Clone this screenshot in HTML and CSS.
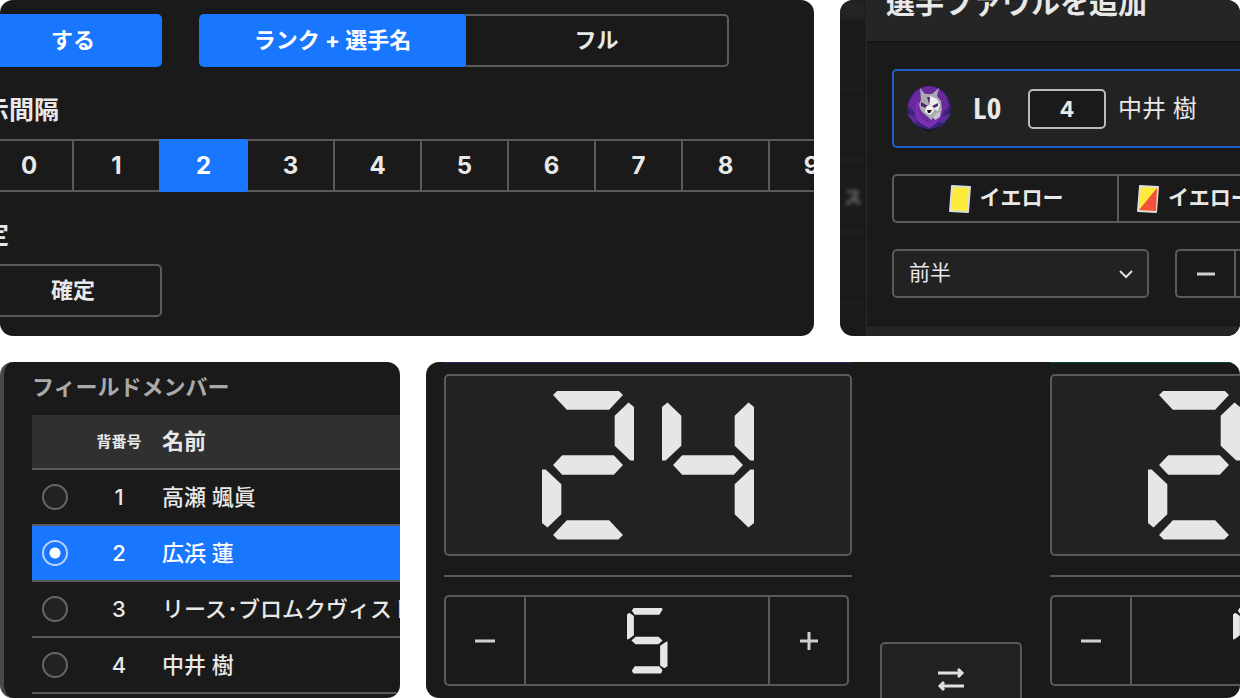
FILE: index.html
```
<!DOCTYPE html>
<html lang="ja">
<head>
  <meta charset="UTF-8" />
  <meta name="viewport" content="width=device-width, initial-scale=1.0" />
  <title>スコアボード</title>
  <link rel="stylesheet" href="styles.css">
</head>
<body>

  <main class="board">
    <div class="board-row wide-first">

      <section class="panel settings">
        <div class="settings-body">
          <div class="settings-row">
            <button class="btn active" type="button">する</button>
            <div class="segments">
              <button class="segment active" type="button">ランク + 選手名</button>
              <button class="segment" type="button">フル</button>
            </div>
          </div>
          <h2>示間隔</h2>
          <div class="segments numbers">
            <button class="segment" type="button">0</button>
            <button class="segment" type="button">1</button>
            <button class="segment active" type="button">2</button>
            <button class="segment" type="button">3</button>
            <button class="segment" type="button">4</button>
            <button class="segment" type="button">5</button>
            <button class="segment" type="button">6</button>
            <button class="segment" type="button">7</button>
            <button class="segment" type="button">8</button>
            <button class="segment" type="button">9</button>
          </div>
          <h2>定</h2>
          <button class="btn" type="button">確定</button>
        </div>
      </section>

      <section class="panel foul">
        <div class="backdrop">
          <div class="backdrop-row head"></div>
          <div class="backdrop-row"></div>
          <div class="backdrop-row"></div>
          <div class="backdrop-row">ス</div>
          <div class="backdrop-row"></div>
        </div>
        <div class="dialog">
          <header class="dialog-head">
            <h2>選手ファウルを追加</h2>
          </header>
          <div class="dialog-body">
            <div class="player">
              <svg class="emblem" viewBox="0 0 46 48" aria-hidden="true">
                <circle cx="23" cy="23" r="22" fill="#34206a"/>
                <path d="M6 11Q13 1 23 1t17 10l3 9-2 9-7 9-11 5-11-5-7-9-3-9z" fill="#6a2a9e"/>
                <path d="M4 22l5 6 1 5 6 5 7 6 7-6 6-5 1-5 5-6-1 10-7 9-11 5-11-5-7-9z" fill="#3b2378"/>
                <path d="M1 29l8 2 5 6-6 1zM45 29l-8 2-5 6 6 1z" fill="#5a2c96"/>
                <path d="M10 15l5 4-3 6 3 7 7 6 7-4 4-2-2 6-8 5-9-5-5-8z" fill="#7a2fb4"/>
                <path d="M14 3l5 6h7l7-6-2 8 4 5 1 9-3 4-4 3-4 3-4-4-4-3-3-4-1-5 2-4z" fill="#a9a9b0"/>
                <path d="M24 11l7 3 3 6-2 6-4-2-4-4z" fill="#ededf0"/>
                <path d="M15 17l7 4-2 2-5-2zM32 18l-6 3 2 2 4-2zM21 12h3l-1 7z" fill="#4a2472"/>
                <path d="M20 22l3-2 4 2 1 4-4 4-5-3z" fill="#f4f4f4"/>
                <path d="M21 25h5l-2 3h-2z" fill="#16101f"/>
                <path d="M27 32l4-4 4-2-1 6-5 3z" fill="#c4c4ca"/>
                <path d="M11 41l12 4 12-4-12 6z" fill="#18121f"/>
              </svg>
              <span class="rank">LO</span>
              <input class="number" type="text" value="4" aria-label="背番号">
              <span class="name">中井 樹</span>
            </div>
            <div class="segments cards">
              <button class="segment" type="button">
                <svg class="card" viewBox="0 0 24 30" aria-hidden="true">
                  <path d="M4 2l18 1-2 25-18-1z" fill="#ffeb3b" stroke="#ddd" stroke-width="2" stroke-linejoin="round"/>
                </svg>
                <span>イエロー</span>
              </button>
              <button class="segment" type="button">
                <svg class="card" viewBox="0 0 24 30" aria-hidden="true">
                  <path d="M4 2l18 1-2 25-18-1z" fill="#ffeb3b" stroke="#ddd" stroke-width="2" stroke-linejoin="round"/>
                  <path d="M21 4l-1 23-17-1z" fill="#f4513b"/>
                </svg>
                <span>イエロー(2枚目)</span>
              </button>
            </div>
            <div class="time">
              <div class="select">
                <select aria-label="ハーフ">
                  <option>前半</option>
                  <option>後半</option>
                </select>
                <svg viewBox="0 0 16 10" aria-hidden="true">
                  <path d="M2 2l6 6 6-6" fill="none" stroke="#ddd" stroke-width="2"/>
                </svg>
              </div>
              <div class="segments minutes">
                <button class="segment" type="button" aria-label="減らす">
                  <svg class="sign" viewBox="0 0 20 20" aria-hidden="true"><path d="M1 10h18" stroke="#d0d0d0" stroke-width="3"/></svg>
                </button>
                <button class="segment" type="button" aria-label="増やす"></button>
              </div>
            </div>
          </div>
          <footer class="dialog-foot"></footer>
        </div>
      </section>
    </div>

    <div class="board-row wide-last">

      <section class="panel members">
        <h2>フィールドメンバー</h2>
        <table>
          <thead>
            <tr>
              <th class="pick"></th>
              <th class="no">背番号</th>
              <th class="player-name">名前</th>
            </tr>
          </thead>
          <tbody>
            <tr>
              <td class="pick"><input type="radio" name="member" aria-label="高瀬 颯眞"></td>
              <td class="no">1</td>
              <td class="player-name">高瀬 颯眞</td>
            </tr>
            <tr class="selected">
              <td class="pick"><input type="radio" name="member" aria-label="広浜 蓮" checked></td>
              <td class="no">2</td>
              <td class="player-name">広浜 蓮</td>
            </tr>
            <tr>
              <td class="pick"><input type="radio" name="member" aria-label="リース・ブロムクヴィスト"></td>
              <td class="no">3</td>
              <td class="player-name">リース･ブロムクヴィスト</td>
            </tr>
            <tr>
              <td class="pick"><input type="radio" name="member" aria-label="中井 樹"></td>
              <td class="no">4</td>
              <td class="player-name">中井 樹</td>
            </tr>
          </tbody>
        </table>
      </section>

      <section class="panel scores">
        <div class="team home">
          <div class="score" role="img" aria-label="24">
            <span class="digit"><i class="a"></i><i class="b"></i><i class="g"></i><i class="e"></i><i class="d"></i></span>
            <span class="digit"><i class="f"></i><i class="g"></i><i class="b"></i><i class="c"></i></span>
          </div>
          <hr>
          <div class="segments counter">
            <button class="segment" type="button" aria-label="減らす">
              <svg class="sign" viewBox="0 0 20 20" aria-hidden="true"><path d="M0 10h20" stroke="#d0d0d0" stroke-width="3"/></svg>
            </button>
            <div class="segment count" role="img" aria-label="5">
              <span class="digit small"><i class="a"></i><i class="f"></i><i class="g"></i><i class="c"></i><i class="d"></i></span>
            </div>
            <button class="segment" type="button" aria-label="増やす">
              <svg class="sign" viewBox="0 0 20 20" aria-hidden="true"><path d="M1 10h18M10 1v18" stroke="#d0d0d0" stroke-width="3"/></svg>
            </button>
          </div>
        </div>

        <div class="middle">
          <button class="swap" type="button" aria-label="入れ替え">
            <svg viewBox="0 0 28 26" aria-hidden="true">
              <path d="M1 6h24M21 2l4 4-4 4M27 19H3M7 15l-4 4 4 4" fill="none" stroke="#e0e0e0" stroke-width="3"/>
            </svg>
          </button>
        </div>

        <div class="team away">
          <div class="score" role="img" aria-label="24">
            <span class="digit"><i class="a"></i><i class="b"></i><i class="g"></i><i class="e"></i><i class="d"></i></span>
            <span class="digit"><i class="f"></i><i class="g"></i><i class="b"></i><i class="c"></i></span>
          </div>
          <hr>
          <div class="segments counter">
            <button class="segment" type="button" aria-label="減らす">
              <svg class="sign" viewBox="0 0 20 20" aria-hidden="true"><path d="M0 10h20" stroke="#d0d0d0" stroke-width="3"/></svg>
            </button>
            <div class="segment count" role="img" aria-label="7">
              <span class="digit small"><i class="a"></i><i class="f"></i><i class="b"></i><i class="c"></i></span>
            </div>
            <button class="segment" type="button" aria-label="増やす"></button>
          </div>
        </div>
      </section>
    </div>
  </main>

</body>
</html>
```

FILE: styles.css
```
* {
  box-sizing: border-box;
}
body {
  margin: 0;
  background-color: #fff;
  color: #e8e8e8;
  font-family: Inter, 'Noto Sans CJK JP', sans-serif;
  font-size: 22px;
}
h2 {
  margin: 0;
  font-size: 25px;
  line-height: 26px;
  white-space: nowrap;
}
button, input, select {
  font: inherit;
  color: inherit;
}
.board {
  display: grid;
  grid-template-rows: 1fr 1fr;
  gap: 26px;
  height: 100vh;
}
.board-row {
  display: grid;
  gap: 26px;
  min-height: 0;
}
.wide-first {
  grid-template-columns: minmax(0, 1fr) 400px;
}
.wide-last {
  grid-template-columns: 400px minmax(0, 1fr);
}
.panel {
  min-width: 0;
  min-height: 0;
  overflow: hidden;
  background-color: #1a1a1a;
  border-radius: 13px;
}

/* buttons */
.btn {
  width: 178px;
  height: 53px;
  padding: 0 0 5px;
  background-color: #1a1a1a;
  border: 2px solid #5a5a5a;
  border-radius: 5px;
  font-weight: bold;
}
.segments {
  display: flex;
}
.segment {
  display: flex;
  flex: none;
  align-items: center;
  justify-content: center;
  height: 53px;
  padding: 0;
  background-color: #1a1a1a;
  border: 2px solid #5a5a5a;
  border-right-width: 0;
  font-weight: bold;
  white-space: nowrap;
}
.segment:first-child {
  border-radius: 5px 0 0 5px;
}
.segment:last-child {
  border-right-width: 2px;
  border-radius: 0 5px 5px 0;
}
.active {
  background-color: #1976ff;
  border-color: #1976ff;
  color: #fff;
}
.sign {
  width: 20px;
  height: 20px;
}

/* settings */
.settings-body {
  margin-left: -16px;
  padding-top: 14px;
}
.settings-row {
  display: flex;
  gap: 37px;
}
.settings-row .segment {
  width: 265px;
  padding-bottom: 5px;
}
.settings h2 {
  margin: 30px 0 16px;
}
.numbers .segment {
  width: 87px;
  font-size: 24px;
}
.numbers .segment:first-child {
  width: 88px;
}
.active + .segment {
  border-left-color: #1976ff;
}

/* foul dialog */
.foul {
  display: flex;
}
.backdrop {
  flex: none;
  width: 27px;
  border-right: 1px solid #2c2c2c;
}
.backdrop-row {
  display: flex;
  align-items: center;
  justify-content: center;
  height: 71px;
  border-bottom: 3px solid #222;
  color: #777;
  font-size: 18px;
  font-weight: bold;
  filter: blur(2px);
}
.backdrop-row.head {
  height: 20px;
  background-color: #242424;
}
.dialog {
  display: flex;
  flex: 1;
  flex-direction: column;
  min-width: 0;
}
.dialog-head {
  height: 43px;
  padding-left: 19px;
  background-color: #252525;
  border-bottom: 2px solid #141414;
}
.dialog-head h2 {
  margin-top: -15px;
  font-size: 29px;
  line-height: 38px;
}
.dialog-body {
  display: flex;
  flex: 1;
  flex-direction: column;
  gap: 26px;
  padding: 26px 0 0 25px;
}
.player {
  display: flex;
  align-items: center;
  height: 79px;
  padding-left: 12px;
  background-color: #222;
  border: 2px solid #1f5fc8;
  border-right: 0;
  border-radius: 5px 0 0 5px;
}
.emblem {
  width: 46px;
  height: 48px;
}
.rank {
  width: 55px;
  margin-left: 21px;
  padding-bottom: 3px;
  font-family: 'Noto Sans CJK JP', sans-serif;
  font-feature-settings: 'hwid';
  font-size: 28px;
  font-weight: bold;
  line-height: 40px;
}
.number {
  width: 78px;
  height: 40px;
  padding: 0;
  background-color: #1a1a1a;
  border: 2px solid #bbb;
  border-radius: 5px;
  font-weight: bold;
  font-size: 22px;
  text-align: center;
}
.name {
  margin-left: 12px;
  padding-bottom: 4px;
  font-size: 24px;
  white-space: nowrap;
}
.cards .segment {
  gap: 8px;
  width: 225px;
  height: 49px;
}
.cards span {
  padding-bottom: 5px;
  font-size: 21px;
}
.card {
  width: 24px;
  height: 30px;
}
.time {
  display: flex;
  gap: 26px;
}
.select {
  position: relative;
  flex: none;
  width: 257px;
}
.select select {
  width: 100%;
  height: 49px;
  padding: 0 15px 2px;
  appearance: none;
  background-color: #222;
  border: 2px solid #5a5a5a;
  border-radius: 5px;
  font-size: 21px;
}
.select svg {
  position: absolute;
  top: 20px;
  right: 15px;
  width: 16px;
  height: 10px;
  pointer-events: none;
}
.minutes .segment {
  width: 59px;
  height: 49px;
}
.dialog-foot {
  height: 11px;
  background-color: #252525;
  border-top: 1px solid #141414;
}

/* members */
.members {
  padding: 12px 0 0 28px;
  border-left: 4px solid #4a4a4a;
}
.members h2 {
  color: #aaa;
  font-size: 22px;
}
.members table {
  width: 100%;
  margin-top: 15px;
  border-collapse: collapse;
  table-layout: fixed;
}
.members th,
.members td {
  height: 56px;
  padding: 0;
  border-bottom: 2px solid #5a5a5a;
  font-weight: 500;
  text-align: left;
  white-space: nowrap;
}
.members th {
  height: 54px;
  background-color: #303030;
  font-weight: bold;
}
.members .pick {
  width: 60px;
  padding-left: 10px;
}
.members .no {
  width: 70px;
  padding-right: 16px;
  text-align: center;
}
.members th.no {
  padding-bottom: 3px;
  font-size: 15px;
}
.members .player-name {
  padding-bottom: 5px;
}
.members .selected {
  background-color: #1976ff;
  color: #fff;
}
.members input {
  display: block;
  width: 26px;
  height: 26px;
  margin: 0;
  appearance: none;
  background-color: #222;
  border: 2px solid #666;
  border-radius: 50%;
}
.members input:checked {
  background: radial-gradient(circle, #fff 5px, #1976ff 6px);
  border-color: #b5d2ff;
}

/* scores */
.scores {
  display: flex;
  padding-left: 18px;
}
.team {
  flex: none;
  width: 408px;
  padding-top: 11px;
  border-top: 1px solid #2a1f6a;
}
.away {
  border-top-color: #0b4a27;
}
.score {
  display: flex;
  align-items: center;
  justify-content: center;
  gap: 28px;
  height: 182px;
  background-color: #222;
  border: 2px solid #5a5a5a;
  border-radius: 5px;
}
.team hr {
  height: 2px;
  margin: 19px 0 18px;
  background-color: #5a5a5a;
  border: 0;
}
.counter .segment {
  width: 80px;
  height: 91px;
}
.counter .count {
  width: 244px;
}
.counter .segment:last-child {
  width: 81px;
}
.middle {
  flex: none;
  width: 198px;
  padding: 280px 28px 0;
}
.swap {
  display: flex;
  align-items: center;
  justify-content: center;
  width: 100%;
  height: 76px;
  padding: 0;
  background-color: #222;
  border: 2px solid #5a5a5a;
  border-radius: 5px;
}
.swap svg {
  width: 28px;
  height: 26px;
}

/* seven segment display, --tx / --ty are the segment thickness */
.digit {
  --tx: 21%;
  --ty: 13%;
  display: grid;
  width: 92px;
  height: 149px;
}
.digit.small {
  --tx: 18%;
  --ty: 11%;
  width: 41px;
  height: 66px;
}
.digit i {
  grid-area: 1 / 1;
  background-color: #e6e6e6;
}
.digit .a {
  clip-path: polygon(17% 0, 83% 0, 88% 3%, 73% var(--ty), 27% var(--ty), 12% 3%);
}
.digit .b {
  clip-path: polygon(94% 8%, 100% 11%, 100% 47%, 96% 47%, calc(100% - var(--tx)) 37%, calc(100% - var(--tx)) 17%);
}
.digit .c {
  clip-path: polygon(96% 53%, 100% 53%, 100% 89%, 94% 92%, calc(100% - var(--tx)) 83%, calc(100% - var(--tx)) 63%);
}
.digit .d {
  clip-path: polygon(27% calc(100% - var(--ty)), 73% calc(100% - var(--ty)), 88% 97%, 83% 100%, 17% 100%, 12% 97%);
}
.digit .e {
  clip-path: polygon(0 53%, 4% 53%, var(--tx) 63%, var(--tx) 83%, 6% 92%, 0 89%);
}
.digit .f {
  clip-path: polygon(6% 8%, var(--tx) 17%, var(--tx) 37%, 4% 47%, 0 47%, 0 11%);
}
.digit .g {
  clip-path: polygon(12% 50%, 22% calc(50% - var(--ty) / 2), 78% calc(50% - var(--ty) / 2), 88% 50%, 78% calc(50% + var(--ty) / 2), 22% calc(50% + var(--ty) / 2));
}
/* thin segments keep fuller ends */
.small .a {
  clip-path: polygon(18% 0, 86% 0, 88% 3%, 80% var(--ty), 20% var(--ty), 13% 5%);
}
.small .c {
  clip-path: polygon(94% 53%, 100% 51%, 100% 89%, 92% 92%, calc(100% - var(--tx)) 88%, calc(100% - var(--tx)) 58%);
}
.small .d {
  clip-path: polygon(20% calc(100% - var(--ty)), 80% calc(100% - var(--ty)), 88% 95%, 84% 100%, 17% 100%, 13% 96%);
}
.small .f {
  clip-path: polygon(7% 8%, var(--tx) 13%, var(--tx) 42%, 5% 48%, 0 48%, 0 11%);
}
```
